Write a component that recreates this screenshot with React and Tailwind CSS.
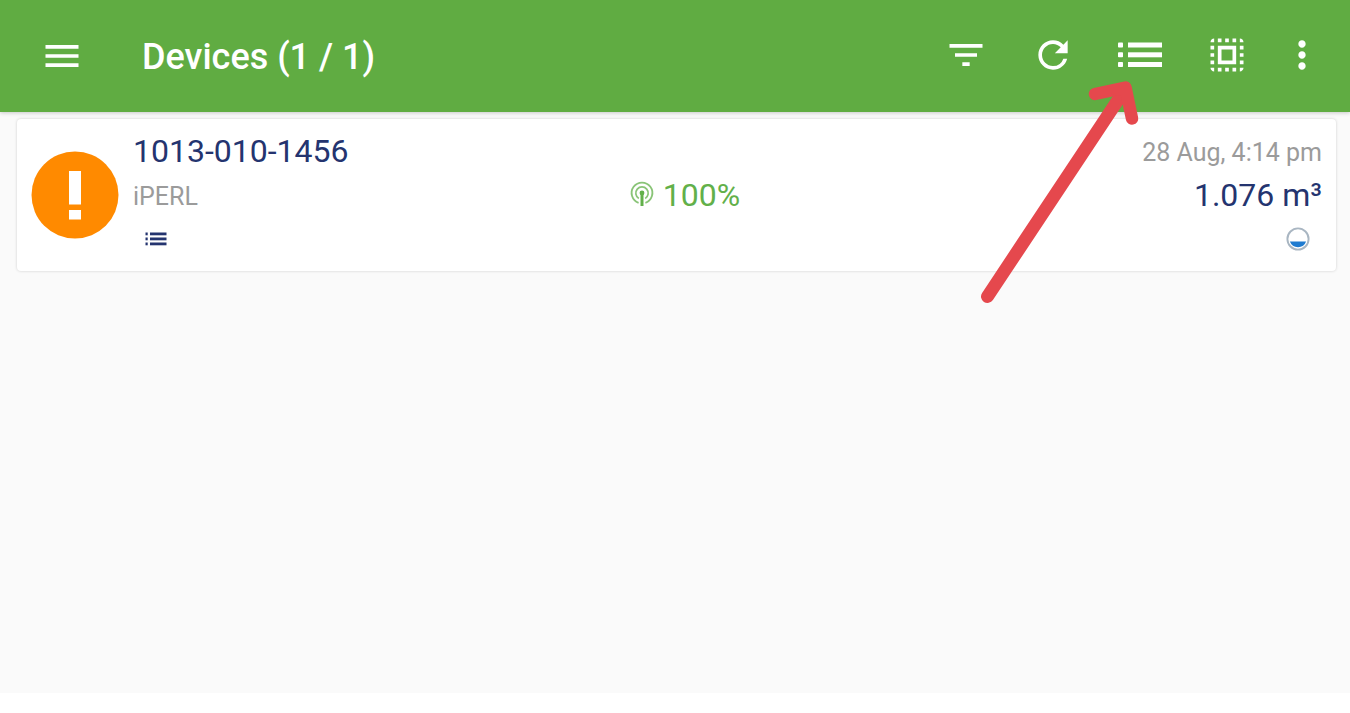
import React from "react";
import {
  MdMenu,
  MdFilterList,
  MdRefresh,
  MdSelectAll,
  MdMoreVert,
} from "react-icons/md";

const DEVICES = [
  {
    serial: "1013-010-1456",
    model: "iPERL",
    signal: "100%",
    readAt: "28 Aug, 4:14 pm",
    value: "1.076 m³",
  },
];

// Wide list icon, used in the toolbar
function ListIcon() {
  return (
    <svg width="44" height="26" viewBox="0 0 44 26" fill="currentColor" aria-hidden="true">
      {[0.5, 10.3, 20].map((y) => (
        <g key={y}>
          <rect x="0" y={y} width="5" height="5" rx="0.8" />
          <rect x="10" y={y} width="34" height="5" />
        </g>
      ))}
    </svg>
  );
}

// Compact list icon, shown under the device name
function ListIconSmall() {
  return (
    <svg width="22" height="14" viewBox="0 0 22 14" fill="currentColor" aria-hidden="true">
      {[0.5, 5.5, 10.5].map((y) => (
        <g key={y}>
          <rect x="0.5" y={y} width="2.2" height="2.8" />
          <rect x="5" y={y} width="16.5" height="2.8" />
        </g>
      ))}
    </svg>
  );
}

function WarningIcon() {
  return (
    <svg width="88" height="88" viewBox="0 0 88 88" role="img" aria-label="Warning">
      <circle cx="44" cy="44" r="43.5" fill="#ff8a00" />
      <rect x="38" y="20" width="12" height="33.5" fill="#fff" />
      <rect x="38" y="59" width="12" height="9.5" fill="#fff" />
    </svg>
  );
}

function SignalIcon() {
  return (
    <svg width="26" height="28" viewBox="0 0 26 28" fill="none" stroke="currentColor" aria-hidden="true">
      <path d="M9.6 21.8A10.4 10.4 0 1 1 16.4 21.8" strokeWidth="1.8" opacity="0.75" />
      <path d="M9.8 17.4A6.2 6.2 0 1 1 16.2 17.4" strokeWidth="1.7" opacity="0.75" />
      <circle cx="13" cy="12" r="2.4" fill="currentColor" stroke="none" />
      <path d="M13 12V25" strokeWidth="3" />
    </svg>
  );
}

function WaterIcon() {
  return (
    <svg width="24" height="24" viewBox="0 0 24 24" fill="none" aria-hidden="true">
      <circle cx="12" cy="12" r="10.6" stroke="#a9b6c2" strokeWidth="1.9" />
      <path d="M3.9 14.6H20.1A8.6 8.6 0 0 1 3.9 14.6Z" fill="#1f7bd0" />
    </svg>
  );
}

function ToolbarButton({ label, className, children }) {
  return (
    <button
      type="button"
      aria-label={label}
      className={`flex items-center justify-center ${className}`}
    >
      {children}
    </button>
  );
}

function DeviceCard({ device }) {
  return (
    <article className="grid grid-cols-[46%_auto_1fr] items-start gap-x-1 rounded-sm bg-white pt-3 pr-3.5 pb-2 pl-3.5 shadow-[0_0_3px_rgba(0,0,0,0.18)]">
      <div className="flex gap-3.5">
        <div className="mt-5 shrink-0">
          <WarningIcon />
        </div>
        <div>
          <h2 className="text-[32px] leading-10 text-[#24346f]">{device.serial}</h2>
          <p className="text-[25px] leading-[52px] text-[#9b9b9b]">{device.model}</p>
          <div className="flex h-8 items-center pl-3 text-[#24346f]">
            <ListIconSmall />
          </div>
        </div>
      </div>

      <div className="mt-11 flex items-center gap-2 text-[32px] leading-10 text-[#62b04a]">
        <SignalIcon />
        <span>{device.signal}</span>
      </div>

      <div className="text-right">
        <p className="text-[25px] leading-11 text-[#9b9b9b]">{device.readAt}</p>
        <p className="text-[32px] leading-10 text-[#24346f]">{device.value}</p>
        <div className="flex h-12 items-center justify-end pr-3">
          <WaterIcon />
        </div>
      </div>
    </article>
  );
}

export default function App() {
  return (
    <div className="flex min-h-screen flex-col bg-white pb-5 font-['Roboto',sans-serif]">
      <header className="relative z-10 flex h-28 items-center bg-[#60ac42] pr-4 pl-10 text-white shadow-[0_1px_4px_rgba(0,0,0,0.2)]">
        <button type="button" aria-label="Menu">
          <MdMenu size={44} />
        </button>
        <h1 className="ml-[58px] flex-1 pt-0.5 text-[36px] font-medium">Devices (1 / 1)</h1>

        <div className="flex pb-0.5">
          <ToolbarButton label="Filter" className="w-[87px]">
            <MdFilterList size={44} />
          </ToolbarButton>
          <ToolbarButton label="Refresh" className="w-[87px]">
            <MdRefresh size={44} />
          </ToolbarButton>
          <ToolbarButton label="Lists" className="w-[87px]">
            <ListIcon />
          </ToolbarButton>
          <ToolbarButton label="Select all" className="w-[87px]">
            <MdSelectAll size={44} />
          </ToolbarButton>
          <ToolbarButton label="More" className="w-16">
            <MdMoreVert size={44} />
          </ToolbarButton>
        </div>

        {/* Arrow pointing at the lists button */}
        <svg
          className="pointer-events-none absolute top-[76px] right-[206px]"
          width="168"
          height="232"
          viewBox="0 0 168 232"
          fill="none"
          stroke="#e5484d"
          strokeLinecap="round"
          strokeLinejoin="round"
          aria-hidden="true"
        >
          <path d="M11.5 220.5L148 15" strokeWidth="13" />
          <path d="M119 18L149.5 11.5L156 42.5" strokeWidth="12.5" />
        </svg>
      </header>

      <main className="flex-1 bg-[#fafafa] pt-[7px] pr-3.5 pl-[17px]">
        {DEVICES.map((device) => (
          <DeviceCard key={device.serial} device={device} />
        ))}
      </main>
    </div>
  );
}
